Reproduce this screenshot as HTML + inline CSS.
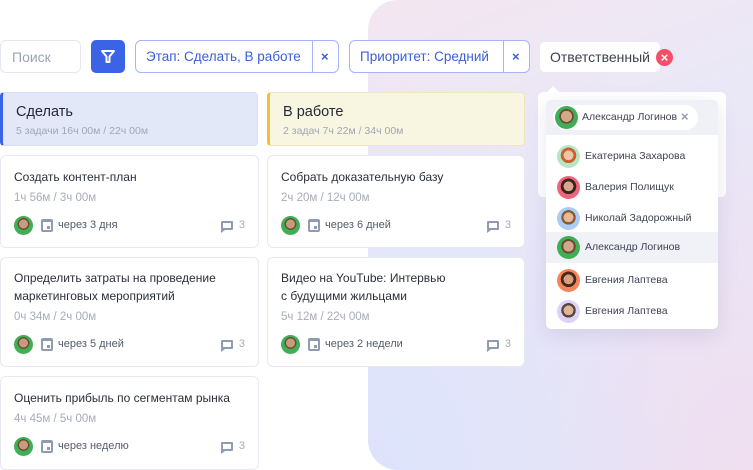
<!DOCTYPE html>
<html><head><meta charset="utf-8"><style>
*{margin:0;padding:0;box-sizing:border-box}
body{width:753px;height:470px;position:relative;overflow:hidden;background:#fff;font-family:"Liberation Sans","DejaVu Sans",sans-serif;color:#2b2f3a}
.a{position:absolute}
.bg{left:368px;top:0;width:385px;height:470px;border-radius:30px 0 0 30px;background:radial-gradient(ellipse at 0% 100%,#dde3fb 0%,rgba(221,227,251,0) 60%),radial-gradient(ellipse at 100% 100%,#f0dff0 0%,rgba(240,223,240,0) 60%),linear-gradient(160deg,#f3e6f0 0%,#e9e8f8 40%,#e6e6f8 100%)}
.box{border:1px solid #e3e6f2;border-radius:6px;background:#fff}
.chip{border:1px solid #a6b6f5;border-radius:6px;background:#fff;height:33px;top:40px;color:#3a5fd9;font-size:13.5px;line-height:32px}
.chip span{position:absolute;left:10px;top:0}
.chip i{position:absolute;top:0;bottom:0;width:1px;background:#a6b6f5}
.chip b{position:absolute;top:0;font-weight:bold;font-size:13px}
.col{height:54px;top:92px;border-radius:4px}
.col .t{position:absolute;left:13px;top:11px;font-size:14.5px;color:#252936}
.col .s{position:absolute;left:13px;top:32px;font-size:10.5px;color:#a0a6b6}
.card{background:#fff;border:1px solid #e6e8f2;border-radius:6px}
.card .t{position:absolute;left:13px;font-size:12px;line-height:18px;color:#2b2f3a}
.card .tm{position:absolute;left:13px;font-size:11.5px;color:#a7acba}
.ft{position:absolute;left:13px;right:13px;height:20px}
.av{position:absolute;width:19px;height:19px;border-radius:50%;background:radial-gradient(circle at 50% 42%,#c89a7e 0 30%,#6b4b36 31% 40%,#3fae55 41%)}
.cal{position:absolute;left:27px;top:3px;width:12px;height:13px;border:2px solid #8e9bb3;border-top-width:3px;border-radius:2px}
.cal:after{content:"";position:absolute;right:1px;bottom:1px;width:3px;height:3px;background:#8e9bb3}
.ft .d{position:absolute;left:44px;top:3px;font-size:11px;color:#555b6a}
.cm{position:absolute;right:12px;top:5px;width:12px;height:9px;border:2px solid #8e9bb3;border-radius:1px}
.cm:after{content:"";position:absolute;left:-2px;bottom:-5px;border-left:4px solid #8e9bb3;border-bottom:3px solid transparent}
.ft .n{position:absolute;right:0;top:3px;font-size:11px;color:#a7acba}
.row{position:absolute;left:0;right:0;height:31px;font-size:10.5px;color:#3f4452}
.row .p{position:absolute;left:11px;top:4px;width:23px;height:23px;border-radius:50%}
.row span{position:absolute;left:39px;top:9px}
</style></head><body>
<div class="a bg"></div>

<div class="a box" style="left:0;top:40px;width:81px;height:33px;font-size:14px;color:#9aa3b5;line-height:33px;padding-left:11px">Поиск</div>
<div class="a" style="left:91px;top:40px;width:34px;height:33px;background:#3a63e5;border-radius:5px">
<svg width="34" height="33" viewBox="0 0 34 33"><path d="M11 11h12l-4.5 5.5v5.5h-3v-5.5z" fill="none" stroke="#fff" stroke-width="2" stroke-linejoin="round"/></svg></div>
<div class="a chip" style="left:135px;width:204px"><span>Этап: Сделать, В работе</span><i style="left:176px"></i><b style="left:185px">×</b></div>
<div class="a chip" style="left:349px;width:181px"><span>Приоритет: Средний</span><i style="left:153px"></i><b style="left:162px">×</b></div>
<div class="a" style="left:540px;top:42px;width:120px;height:30px;background:#fff;border-radius:5px;font-size:14px;color:#3d4250;line-height:31px;padding-left:10px">Ответственный</div>
<div class="a" style="left:656px;top:49px;width:17px;height:17px;border-radius:50%;background:#f0506a;color:#fff;font-size:13px;font-weight:bold;text-align:center;line-height:17px">×</div>

<div class="a col" style="left:0;width:258px;background:#e3e8f9;border:1px solid #d8def6;border-left:3px solid #3a63e5"><div class="t">Сделать</div><div class="s">5 задачи 16ч 00м / 22ч 00м</div></div>
<div class="a col" style="left:267px;width:258px;background:#f8f5e0;border:1px solid #ece6c2;border-left:3px solid #f0bf3c"><div class="t">В работе</div><div class="s">2 задач 7ч 22м / 34ч 00м</div></div>

<div class="a card" style="left:0;top:155px;width:259px;height:93px">
<div class="t" style="top:12px">Создать контент-план</div><div class="tm" style="top:36px">1ч 56м / 3ч 00м</div>
<div class="ft" style="top:60px"><div class="av"></div><div class="cal"></div><div class="d">через 3 дня</div><div class="cm"></div><div class="n">3</div></div></div>
<div class="a card" style="left:0;top:257px;width:259px;height:110px">
<div class="t" style="top:11px">Определить затраты на проведение<br>маркетинговых мероприятий</div><div class="tm" style="top:53px">0ч 34м / 2ч 00м</div>
<div class="ft" style="top:77px"><div class="av"></div><div class="cal"></div><div class="d">через 5 дней</div><div class="cm"></div><div class="n">3</div></div></div>
<div class="a card" style="left:0;top:376px;width:259px;height:94px">
<div class="t" style="top:12px">Оценить прибыль по сегментам рынка</div><div class="tm" style="top:36px">4ч 45м / 5ч 00м</div>
<div class="ft" style="top:60px"><div class="av"></div><div class="cal"></div><div class="d">через неделю</div><div class="cm"></div><div class="n">3</div></div></div>

<div class="a card" style="left:267px;top:155px;width:258px;height:93px">
<div class="t" style="top:12px">Собрать доказательную базу</div><div class="tm" style="top:36px">2ч 20м / 12ч 00м</div>
<div class="ft" style="top:60px"><div class="av"></div><div class="cal"></div><div class="d">через 6 дней</div><div class="cm"></div><div class="n">3</div></div></div>
<div class="a card" style="left:267px;top:257px;width:258px;height:110px">
<div class="t" style="top:11px">Видео на YouTube: Интервью<br>с будущими жильцами</div><div class="tm" style="top:53px">5ч 12м / 22ч 00м</div>
<div class="ft" style="top:77px"><div class="av"></div><div class="cal"></div><div class="d">через 2 недели</div><div class="cm"></div><div class="n">3</div></div></div>

<div class="a" style="left:538px;top:92px;width:188px;height:105px;background:#fff;border-radius:5px"></div>
<div class="a" style="left:546px;top:86px;width:0;height:0;border-left:7px solid transparent;border-right:7px solid transparent;border-bottom:7px solid #fff"></div>
<div class="a" style="left:546px;top:100px;width:172px;height:229px;background:#fff;border-radius:5px;box-shadow:0 6px 20px rgba(120,120,170,.18);overflow:hidden">
<div class="a" style="left:0;top:0;width:172px;height:35px;background:#f0f1f7"></div>
<div class="a" style="left:7px;top:5px;width:145px;height:25px;background:#fff;border-radius:13px;font-size:10.5px;color:#3f4452">
<div class="a" style="left:2px;top:1px;width:23px;height:23px;border-radius:50%;background:radial-gradient(circle at 50% 45%,#d6a88a 0 32%,#6b4b36 33% 42%,#3fae55 43%)"></div>
<span class="a" style="left:29px;top:6px">Александр Логинов</span><b class="a" style="left:128px;top:4px;color:#8e9bb3;font-size:13px">×</b></div>
<div class="row" style="top:41px"><div class="p" style="background:radial-gradient(circle at 50% 45%,#f0c4a8 0 28%,#c9622f 29% 45%,#b7e6c7 46%)"></div><span>Екатерина Захарова</span></div>
<div class="row" style="top:72px"><div class="p" style="background:radial-gradient(circle at 50% 45%,#d9a88c 0 28%,#3a2620 29% 45%,#f0637a 46%)"></div><span>Валерия Полищук</span></div>
<div class="row" style="top:103px"><div class="p" style="background:radial-gradient(circle at 50% 45%,#e8b998 0 28%,#8a5c34 29% 42%,#a9cdf7 43%)"></div><span>Николай Задорожный</span></div>
<div class="row" style="top:132px;background:#f1f2f8;height:31px"><div class="p" style="top:4px;background:radial-gradient(circle at 50% 45%,#d6a88a 0 30%,#6b4b36 31% 42%,#3fae55 43%)"></div><span>Александр Логинов</span></div>
<div class="row" style="top:165px"><div class="p" style="background:radial-gradient(circle at 50% 45%,#d9a07e 0 28%,#4a2a1c 29% 45%,#f4855a 46%)"></div><span>Евгения Лаптева</span></div>
<div class="row" style="top:196px"><div class="p" style="background:radial-gradient(circle at 50% 45%,#e0b69a 0 28%,#56463c 29% 42%,#ddd3f6 43%)"></div><span>Евгения Лаптева</span></div>
</div>
</body></html>
